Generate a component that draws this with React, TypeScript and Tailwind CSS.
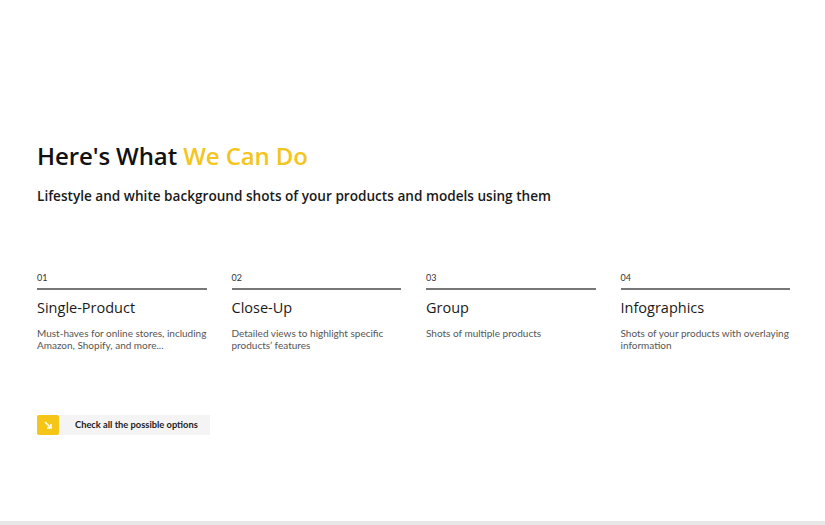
import React from 'react';

const SERVICES = [
  {
    num: '01',
    title: 'Single-Product',
    text: 'Must-haves for online stores, including Amazon, Shopify, and more...',
  },
  {
    num: '02',
    title: 'Close-Up',
    text: 'Detailed views to highlight specific products\u2019 features',
  },
  { num: '03', title: 'Group', text: 'Shots of multiple products' },
  {
    num: '04',
    title: 'Infographics',
    text: 'Shots of your products with overlaying information',
  },
];

export default function App() {
  return (
    <main className="flex h-[525px] w-[825px] flex-col overflow-hidden bg-white font-['Lato',sans-serif]">
      <div className="flex-1 px-[37px] pt-[140px]">
        <h1 className="font-['Open_Sans',sans-serif] text-[24px] leading-[32px] font-semibold tracking-[-0.1px] text-[#111]">
          Here's What <span className="text-[#f3c51d]">We Can Do</span>
        </h1>
        <p className="mt-[14px] font-['Open_Sans',sans-serif] text-[13.6px] leading-[20px] font-semibold text-[#1a1a1a]">
          Lifestyle and white background shots of your products and models using them
        </p>

        <div className="mt-[66px] grid w-[753px] grid-cols-4 gap-x-[25px]">
          {SERVICES.map((s) => (
            <div key={s.num}>
              <div className="border-b-2 border-[#777] pb-[4px] text-[9px] leading-[12px] text-[#333]">
                {s.num}
              </div>
              <h2 className="mt-[8px] font-['Open_Sans',sans-serif] text-[14.5px] leading-[20px] font-medium text-[#1a1a1a]">
                {s.title}
              </h2>
              <p className="mt-[9px] text-[10px] leading-[12px] text-[#555]">{s.text}</p>
            </div>
          ))}
        </div>

        <div className="mt-[64px] flex h-[20px] w-[173px] items-stretch">
          <div className="flex w-[22px] items-center justify-center rounded-[2px] bg-[#f5c518]">
            <svg width="10" height="10" viewBox="0 0 10 10" fill="none" stroke="white" strokeWidth="1.6">
              <path d="M2 2 L8 8 M8 4 V8 H4" />
            </svg>
          </div>
          <div className="flex flex-1 items-center bg-[#f4f4f4] pl-[16px] text-[9.3px] font-bold text-[#222]">
            Check all the possible options
          </div>
        </div>
      </div>
      <div className="h-[4px] bg-[#e8e8e8]" />
    </main>
  );
}
